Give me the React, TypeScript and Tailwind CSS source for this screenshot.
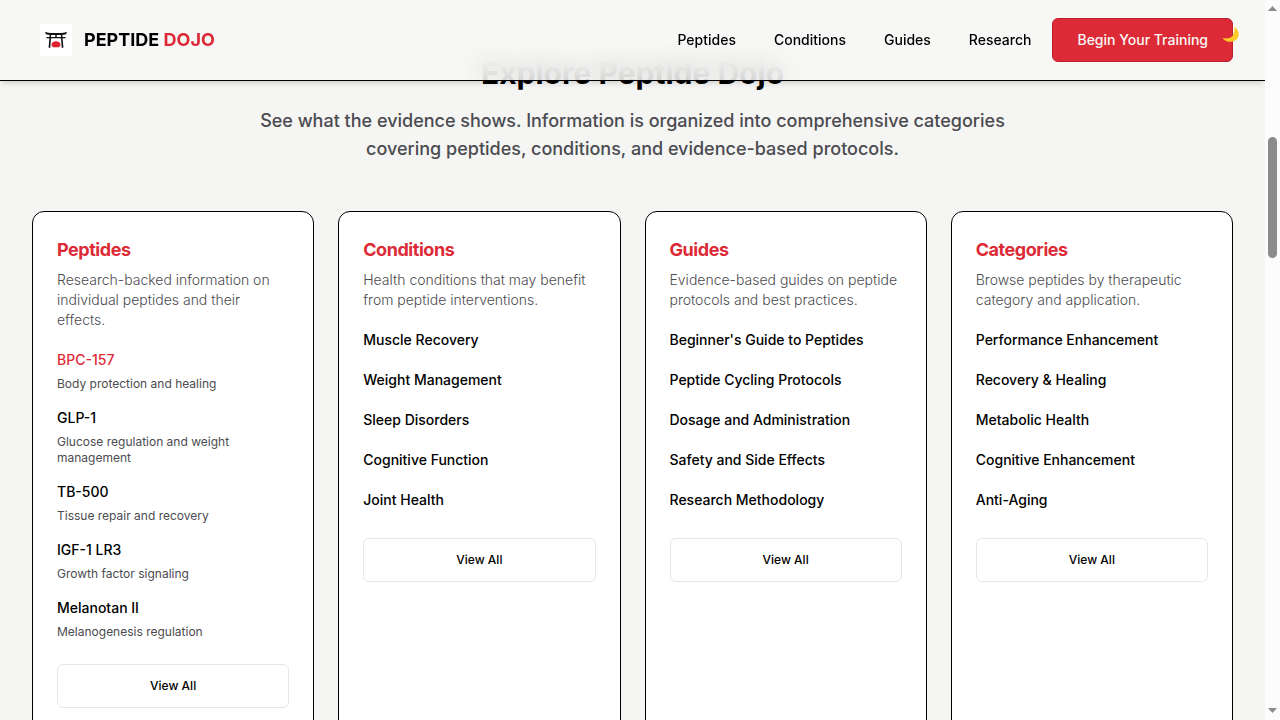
type Item = { label: string; note?: string; active?: boolean };
type Group = { title: string; text: string; items: Item[] };

const nav = ["Peptides", "Conditions", "Guides", "Research"];

const groups: Group[] = [
  {
    title: "Peptides",
    text: "Research-backed information on individual peptides and their effects.",
    items: [
      { label: "BPC-157", note: "Body protection and healing", active: true },
      { label: "GLP-1", note: "Glucose regulation and weight management" },
      { label: "TB-500", note: "Tissue repair and recovery" },
      { label: "IGF-1 LR3", note: "Growth factor signaling" },
      { label: "Melanotan II", note: "Melanogenesis regulation" },
    ],
  },
  {
    title: "Conditions",
    text: "Health conditions that may benefit from peptide interventions.",
    items: [
      { label: "Muscle Recovery" },
      { label: "Weight Management" },
      { label: "Sleep Disorders" },
      { label: "Cognitive Function" },
      { label: "Joint Health" },
    ],
  },
  {
    title: "Guides",
    text: "Evidence-based guides on peptide protocols and best practices.",
    items: [
      { label: "Beginner's Guide to Peptides" },
      { label: "Peptide Cycling Protocols" },
      { label: "Dosage and Administration" },
      { label: "Safety and Side Effects" },
      { label: "Research Methodology" },
    ],
  },
  {
    title: "Categories",
    text: "Browse peptides by therapeutic category and application.",
    items: [
      { label: "Performance Enhancement" },
      { label: "Recovery & Healing" },
      { label: "Metabolic Health" },
      { label: "Cognitive Enhancement" },
      { label: "Anti-Aging" },
    ],
  },
];

function Logo() {
  return (
    <svg viewBox="0 0 32 32" className="size-8 bg-white" aria-hidden="true">
      <path d="M5 7.900c3 .9 6.600 1.200 11 1.200s8-.3 11-1.200l-.9 2.300c-3 .7-6.300.8-10.100.8s-7.100-.1-10.100-.8z" fill="#111" />
      <path d="M6.500 12.900h19v1.400h-19zM15.300 10.500h1.400v3h-1.400zM9.700 10.500h1.500L10.300 23.700H8.600zM20.800 10.500h1.500l1.100 13.200h-1.700z" fill="#111" />
      <path d="M13.200 23.200C10 21.200 11.800 17.200 16 17.200s6 4 2.800 6z" fill="#e0202b" />
    </svg>
  );
}

function Moon() {
  return (
    <svg viewBox="0 0 18 18" className="size-[18px]" aria-hidden="true">
      <path d="M12.200 1c4.300 2.300 5.700 7.100 3.500 11-2.800 4.900-10.900 5.400-15.400 0 4.200 1.100 8.800.2 10.700-2.800 1.500-2.500 1.800-5.300 1.200-8.200z" fill="#ffc928" />
    </svg>
  );
}

function Header() {
  return (
    <header className="absolute inset-x-0 top-0 z-10 border-b border-black bg-[#f8f8f6]/80 shadow-md backdrop-blur-md">
      <div className="flex h-20 items-center justify-between pr-8 pl-10">
        <a href="#home" className="flex items-center gap-3">
          <Logo />
          <span className="text-lg font-bold">
            PEPTIDE <span className="text-[#dc2b36]">DOJO</span>
          </span>
        </a>
        <div className="flex items-center gap-[21px]">
          <nav className="flex gap-[38px]">
            {nav.map((n) => (
              <a key={n} href={`#${n.toLowerCase()}`} className="text-sm font-medium">
                {n}
              </a>
            ))}
          </nav>
          <div className="relative">
            <button type="button" className="h-11 rounded-md border border-[#b9222d] bg-[#dc2b36] px-6 text-sm font-medium text-[#f8f8f6]">
              Begin Your Training
            </button>
            <button type="button" aria-label="Toggle dark mode" className="absolute top-2 -right-[7px]">
              <Moon />
            </button>
          </div>
        </div>
      </div>
    </header>
  );
}

function Card({ group }: { group: Group }) {
  return (
    <article className="rounded-xl border border-black bg-white p-6">
      <h3 className="text-lg leading-7 font-bold tracking-tight text-[#dc2b36]">{group.title}</h3>
      <p className="mt-1.5 text-sm leading-5 font-light text-[#4b4b50]">{group.text}</p>
      <ul className="mt-5 flex flex-col gap-4">
        {group.items.map((item) => (
          <li key={item.label} className="min-h-6">
            <a href="#item" className={item.active ? "block text-sm leading-5 font-medium text-[#dc2b36]" : "block text-sm leading-5 font-medium"}>
              {item.label}
            </a>
            {item.note && <p className="mt-1.5 text-xs leading-4 text-[#4b4b50]">{item.note}</p>}
          </li>
        ))}
      </ul>
      <button type="button" className="mt-6 h-11 w-full rounded-md border border-gray-200 text-xs font-medium">
        View All
      </button>
    </article>
  );
}

function ScrollRail() {
  return (
    <div className="flex w-[15px] shrink-0 flex-col items-center bg-[#fcfcfc]" aria-hidden="true">
      <svg viewBox="0 0 9 5" className="mt-1.5 h-[5px] w-[9px] shrink-0">
        <path d="M0 5L4.500 0L9 5z" fill="#8b8b8b" />
      </svg>
      <div className="mt-[126px] h-[121px] w-[9px] rounded-full bg-[#8b8b8b]" />
      <svg viewBox="0 0 9 5" className="mt-auto mb-[7px] h-[5px] w-[9px] shrink-0">
        <path d="M0 0L4.500 5L9 0z" fill="#8b8b8b" />
      </svg>
    </div>
  );
}

export default function App() {
  return (
    <div className="flex h-screen overflow-hidden bg-[#f5f5f3] font-[Inter,sans-serif] text-black">
      <div className="relative min-w-0 flex-1 overflow-hidden">
        <Header />
        <main className="px-8 pt-[55px] pb-16">
          <h2 className="text-center text-3xl leading-9 font-bold">Explore Peptide Dojo</h2>
          <p className="mx-auto mt-4 max-w-3xl text-center text-lg leading-7 font-medium text-[#4b4b50]">
            See what the evidence shows. Information is organized into comprehensive categories covering peptides, conditions, and evidence-based protocols.
          </p>
          <div className="mt-12 grid grid-cols-4 gap-6">
            {groups.map((g) => (
              <Card key={g.title} group={g} />
            ))}
          </div>
        </main>
      </div>
      <ScrollRail />
    </div>
  );
}
